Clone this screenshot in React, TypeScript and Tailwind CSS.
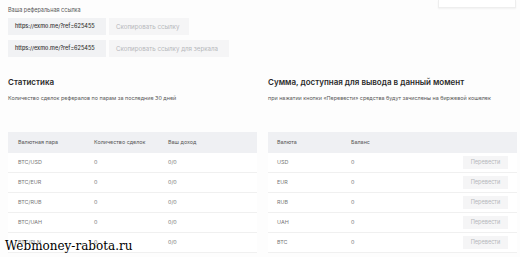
import React from "react";

const pairs = ["BTC/USD", "BTC/EUR", "BTC/RUB", "BTC/UAH", "BTC/PLN"];
const currencies = ["USD", "EUR", "RUB", "UAH", "BTC"];

export default function App() {
  return (
    <div className="relative w-[520px] h-[257px] overflow-hidden bg-[#fdfdfd] font-['Inter',sans-serif] text-[#222]">
      {/* Referral links */}
      <div className="flex justify-between pl-[8px] pr-[4px]">
        <div className="pt-[7px]">
          <div className="text-[5.5px] leading-[7px] text-[#555]">Ваша реферальная ссылка</div>
          <div className="mt-[4px] flex flex-col gap-[5px]">
            <div className="flex gap-[3px]">
              <div className="w-[98px] h-[17px] flex items-center pl-[7px] bg-[#f1f2f4] text-[5.5px] font-medium text-[#333]">
                https://exmo.me/?ref=625455
              </div>
              <div className="w-[80px] h-[17px] flex items-center pl-[7px] bg-[#f5f5f6] text-[6.2px] text-[#b5b7bb]">
                Скопировать ссылку
              </div>
            </div>
            <div className="flex gap-[3px]">
              <div className="w-[98px] h-[17px] flex items-center pl-[7px] bg-[#f1f2f4] text-[5.5px] font-medium text-[#333]">
                https://exmo.me/?ref=625455
              </div>
              <div className="w-[120px] h-[17px] flex items-center pl-[7px] bg-[#f5f5f6] text-[6.2px] text-[#b5b7bb]">
                Скопировать ссылку для зеркала
              </div>
            </div>
          </div>
        </div>
        <div className="w-[78px] h-[8px] border border-t-0 border-[#eeeeee] bg-white shadow-[0_1px_2px_rgba(0,0,0,0.05)]" />
      </div>

      {/* Two columns */}
      <div className="mt-[20px] grid grid-cols-[249px_249px] gap-[11px] pl-[8px]">
        {/* Statistics */}
        <div>
          <div className="text-[8px] leading-[10px] font-semibold text-[#2a2a2a]">Статистика</div>
          <div className="mt-[8px] text-[5.4px] leading-[7px] text-[#555]">
            Количество сделок рефералов по парам за последние 30 дней
          </div>
          <div className="mt-[30px] bg-white">
            <div className="grid grid-cols-[76px_74px_1fr] h-[21px] items-center bg-[#eff0f3] pl-[10px] text-[5.4px] text-[#555]">
              <span>Валютная пара</span>
              <span>Количество сделок</span>
              <span>Ваш доход</span>
            </div>
            {pairs.map((p) => (
              <div
                key={p}
                className="grid grid-cols-[76px_74px_1fr] h-[20px] items-center border-b border-[#f0f0f0] pl-[10px] text-[5.4px] text-[#777]"
              >
                <span>{p}</span>
                <span>0</span>
                <span>0/0</span>
              </div>
            ))}
          </div>
        </div>

        {/* Balance */}
        <div>
          <div className="text-[8px] leading-[10px] font-semibold text-[#2a2a2a]">
            Сумма, доступная для вывода в данный момент
          </div>
          <div className="mt-[8px] text-[5.4px] leading-[7px] text-[#555] whitespace-nowrap">
            при нажатии кнопки «Перевести» средства будут зачислены на биржевой кошелек
          </div>
          <div className="mt-[30px] bg-white">
            <div className="grid grid-cols-[74px_1fr_auto] h-[21px] items-center bg-[#eff0f3] pl-[9px] text-[5.4px] text-[#555]">
              <span>Валюта</span>
              <span>Баланс</span>
              <span />
            </div>
            {currencies.map((c) => (
              <div
                key={c}
                className="grid grid-cols-[74px_1fr_auto] h-[20px] items-center border-b border-[#f0f0f0] pl-[9px] pr-[9px] text-[5.4px] text-[#777]"
              >
                <span>{c}</span>
                <span>0</span>
                <span className="w-[45px] h-[13px] flex items-center justify-center bg-[#f5f5f6] text-[5.6px] text-[#b5b7bb]">
                  Перевести
                </span>
              </div>
            ))}
          </div>
        </div>
      </div>

      {/* Watermark */}
      <div className="absolute left-[5px] bottom-[4px] font-['DejaVu_Serif',serif] text-[12px] leading-[14px] text-black">
        Webmoney-rabota.ru
      </div>
    </div>
  );
}
